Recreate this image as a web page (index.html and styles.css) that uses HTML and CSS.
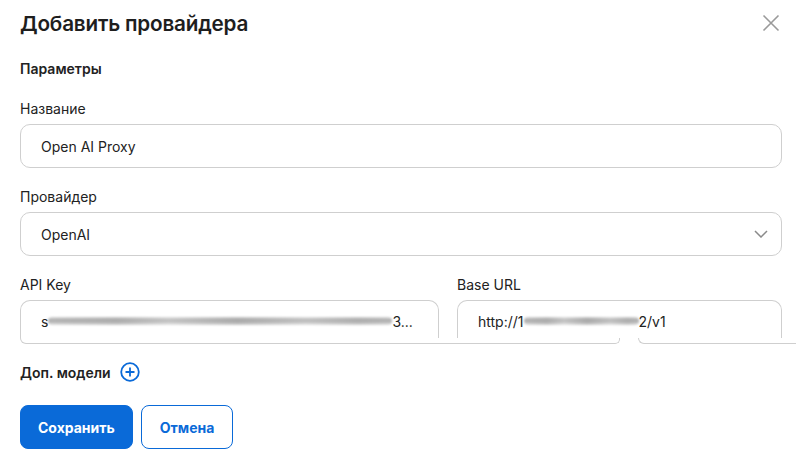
FILE: index.html
```html
<!DOCTYPE html>
<html lang="ru">
<head>
<meta charset="utf-8">
<title>Добавить провайдера</title>
<link rel="stylesheet" href="styles.css">
</head>
<body>
<div class="dialog">
  <div class="header">
    <h1 class="title">Добавить провайдера</h1>
    <button class="close" aria-label="Закрыть">
      <svg width="18" height="18" viewBox="0 0 18 18"><path d="M1.5 1.5 L16.5 16.5 M16.5 1.5 L1.5 16.5" stroke="#9a9a9a" stroke-width="1.6" fill="none"/></svg>
    </button>
  </div>

  <div class="section-title">Параметры</div>

  <div class="field">
    <label class="label">Название</label>
    <div class="input">Open AI Proxy</div>
  </div>

  <div class="field">
    <label class="label">Провайдер</label>
    <div class="input select">
      <span>OpenAI</span>
      <svg class="chev" width="14" height="8" viewBox="0 0 14 8"><path d="M1 1 L7 7 L13 1" stroke="#8a8a8a" stroke-width="1.5" fill="none"/></svg>
    </div>
  </div>

  <div class="pair">
    <div class="col">
      <label class="label">API Key</label>
      <div class="box"><span class="val">s<span class="blur b1"></span>3...</span></div>
    </div>
    <div class="col">
      <label class="label">Base URL</label>
      <div class="box"><span class="val">http://1<span class="blur b2"></span>2/v1</span></div>
    </div>
  </div>
  <div class="strip">
    <div class="piece p1"></div>
    <div class="piece p2"></div>
  </div>

  <div class="extra">
    <span class="extra-label">Доп. модели</span>
    <svg width="20" height="20" viewBox="0 0 20 20"><circle cx="10" cy="10" r="8.8" stroke="#0a6ad8" stroke-width="1.8" fill="none"/><path d="M10 5.5 V14.5 M5.5 10 H14.5" stroke="#0a6ad8" stroke-width="1.8"/></svg>
  </div>

  <div class="actions">
    <button class="btn primary">Сохранить</button>
    <button class="btn secondary">Отмена</button>
  </div>
</div>
</body>
</html>
```

FILE: styles.css
```css
html, body {
  margin: 0;
  padding: 0;
  background: #fff;
  overflow: hidden;
}
body {
  font-family: Inter, "Noto Sans", sans-serif;
  color: #222;
  font-size: 14px;
}
.dialog {
  padding: 9px 14px 0 20px;
}
.header {
  display: flex;
  justify-content: space-between;
  align-items: center;
  height: 28px;
}
.title {
  margin: 0;
  font-size: 20.7px;
  font-weight: 600;
  letter-spacing: -0.2px;
  color: #1e1e1e;
}
.close {
  border: 0;
  background: none;
  padding: 0;
  margin-right: 2px;
  width: 18px;
  height: 18px;
  display: flex;
}
.section-title {
  margin-top: 23px;
  font-weight: 600;
  line-height: 18px;
}
.field {
  margin-top: 22px;
}
.field + .field {
  margin-top: 20px;
}
.label {
  display: block;
  line-height: 18px;
}
.input {
  margin-top: 6px;
  height: 42px;
  border: 1px solid #cfcfcf;
  border-radius: 10px;
  padding: 0 20px;
  display: flex;
  align-items: center;
  color: #222;
}
.select {
  justify-content: space-between;
  padding-right: 13px;
}
.pair {
  display: grid;
  grid-template-columns: 419px 1fr;
  column-gap: 18px;
  margin-top: 20px;
}
.box {
  margin-top: 6px;
  height: 37px;
  border: 1px solid #cfcfcf;
  border-bottom: 0;
  border-radius: 10px 10px 0 0;
  padding: 0 20px;
  display: flex;
  align-items: center;
}
.val {
  display: flex;
  align-items: center;
  padding-top: 3px;
  white-space: nowrap;
}
.blur {
  display: inline-block;
  height: 8px;
  border-radius: 4px;
  filter: blur(1.1px);
  background:
    linear-gradient(90deg, rgba(255,255,255,0) 0%, rgba(150,150,150,0.25) 20%, rgba(255,255,255,0.2) 35%, rgba(140,140,140,0.25) 55%, rgba(255,255,255,0.15) 75%, rgba(150,150,150,0.2) 90%, rgba(255,255,255,0) 100%),
    linear-gradient(180deg, #dcdcdc 0%, #a9a9a9 45%, #c4c4c4 70%, #e4e4e4 100%);
}
.b1 { width: 344px; }
.b2 { width: 115px; }
.strip {
  display: flex;
  gap: 18px;
  margin-right: -20px;
}
.piece {
  height: 5px;
  border: 1px solid #cfcfcf;
  border-top: 0;
}
.p1 {
  width: 598px;
  border-radius: 0 0 8px 10px;
}
.p2 {
  flex: 1;
  border-right: 0;
  border-radius: 0 0 0 8px;
}
.extra {
  margin-top: 18px;
  display: flex;
  align-items: center;
  gap: 9px;
  height: 20px;
}
.extra-label {
  font-weight: 600;
}
.actions {
  margin-top: 23px;
  display: flex;
  gap: 8px;
}
.btn {
  height: 44px;
  border-radius: 8px;
  font-family: Inter, "Noto Sans", sans-serif;
  font-size: 14px;
  font-weight: 700;
  padding: 0 17px;
}
.primary {
  background: #0a6ad8;
  color: #fff;
  border: 1px solid #0a6ad8;
}
.secondary {
  background: #fff;
  color: #0a6ad8;
  border: 1px solid #0a6ad8;
  padding: 0 18px;
}
```
